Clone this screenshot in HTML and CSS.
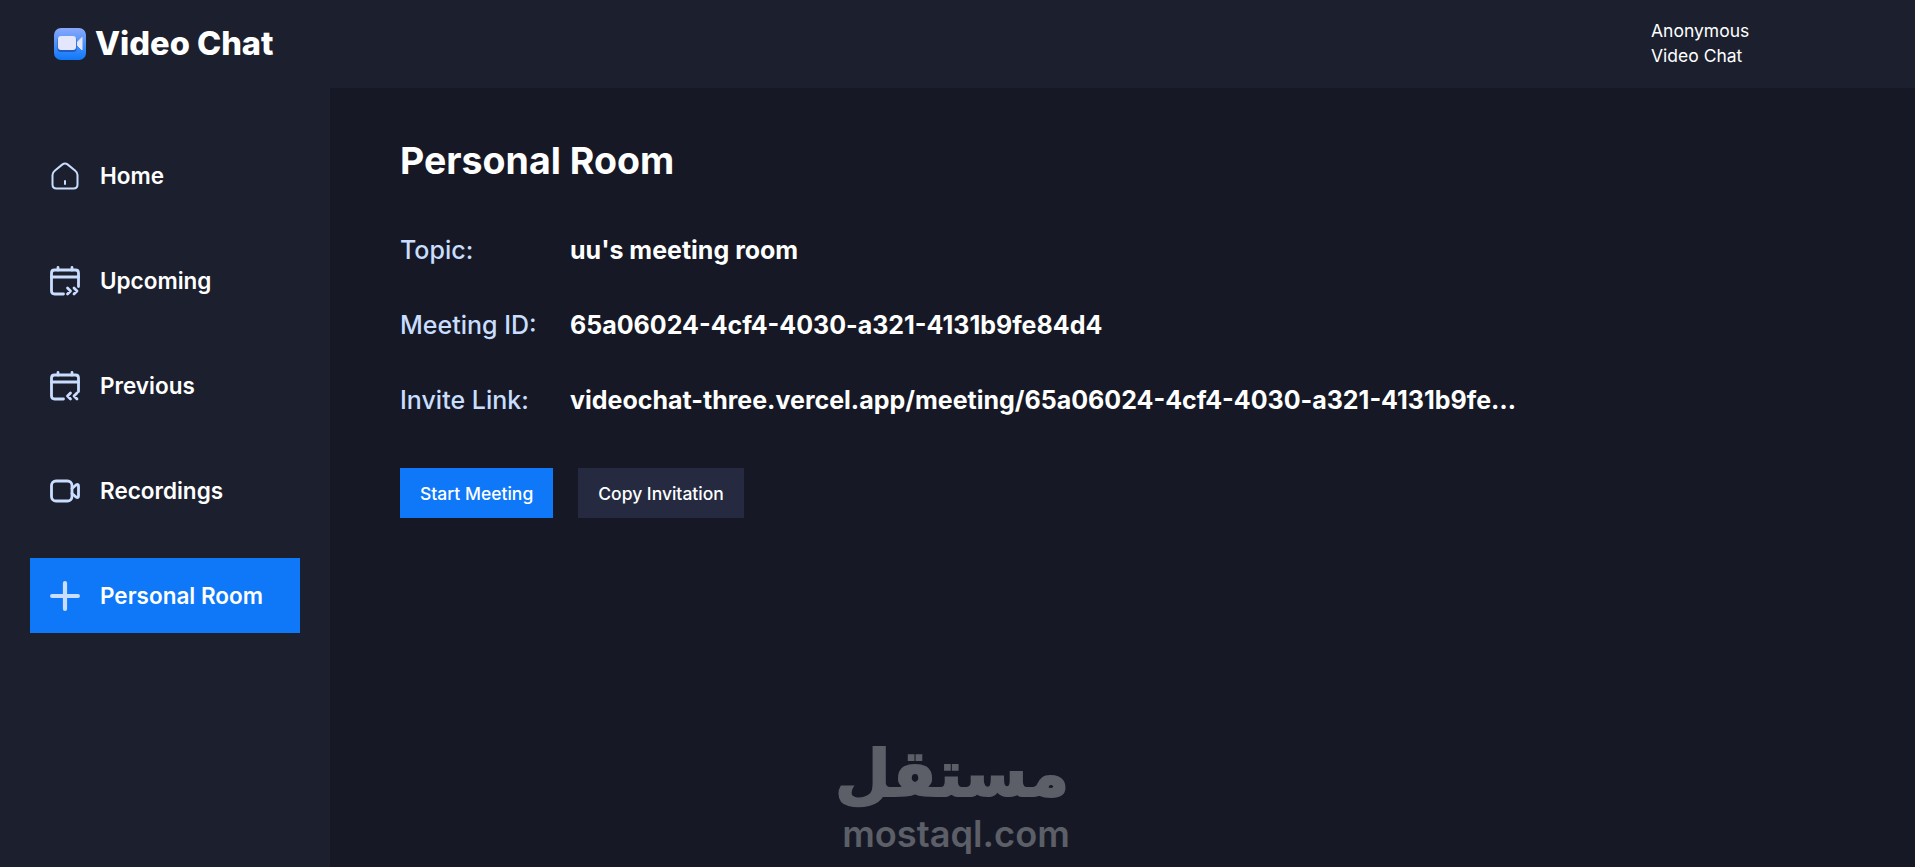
FILE: index.html
```html
<!DOCTYPE html>
<html lang="en">
<head>
    <meta charset="UTF-8">
    <meta name="viewport" content="width=device-width, initial-scale=1.0">
    <title>Video Chat</title>
    <link rel="stylesheet" href="styles.css">
</head>
<body>
    <header class="topbar">
        <a class="brand">
            <svg class="brand-icon" viewBox="0 0 32 32">
                <defs>
                    <linearGradient id="brand-bg" x1="0" y1="0" x2="0" y2="1">
                        <stop offset="0" stop-color="#8aa8fb"/>
                        <stop offset="1" stop-color="#0e78f9"/>
                    </linearGradient>
                </defs>
                <rect width="32" height="32" rx="7" fill="url(#brand-bg)"/>
                <rect x="3.5" y="9" width="19" height="15" rx="3" fill="#1b4fae" opacity="0.75"/>
                <rect x="4" y="8" width="18" height="14" rx="3" fill="#e4e6fb"/>
                <path d="M23.5 14 L28 9.5 V22 L23.5 17.5 Z" fill="#e4e6fb" stroke="#e4e6fb" stroke-linejoin="round"/>
            </svg>
            <span class="brand-name">Video Chat</span>
        </a>
        <div class="user-info">
            <div>Anonymous</div>
            <div>Video Chat</div>
        </div>
    </header>

    <div class="layout">
        <!-- Sidebar -->
        <nav class="sidebar">
            <a class="nav-item">
                <svg class="nav-icon" viewBox="0 0 30 30" fill="none" stroke="#c9ddff" stroke-width="2" stroke-linecap="round" stroke-linejoin="round">
                    <path d="M5 9.5 L12.5 3.4 Q15 1.6 17.5 3.4 L25 9.5 Q27.5 11.5 27.5 14 V23.5 Q27.5 27.5 23.5 27.5 H6.5 Q2.5 27.5 2.5 23.5 V14 Q2.5 11.5 5 9.5 Z"/>
                    <path d="M15 20 V23" stroke-width="2"/>
                </svg>
                <span>Home</span>
            </a>
            <a class="nav-item">
                <svg class="nav-icon" viewBox="0 0 30 30" fill="none" stroke="#c9ddff" stroke-width="2.8" stroke-linecap="round" stroke-linejoin="round">
                    <path d="M13.5 28 H4.5 Q1.5 28 1.5 25 V7 Q1.5 4 4.5 4 H25.5 Q28.5 4 28.5 7 V20.5"/>
                    <path d="M1.5 11 H28.5 M8 1.5 V4 M22 1.5 V4"/>
                    <path d="M17.5 22 L20.5 25 L17.5 28 M24 22 L27 25 L24 28"/>
                </svg>
                <span>Upcoming</span>
            </a>
            <a class="nav-item">
                <svg class="nav-icon" viewBox="0 0 30 30" fill="none" stroke="#c9ddff" stroke-width="2.8" stroke-linecap="round" stroke-linejoin="round">
                    <path d="M13.5 28 H4.5 Q1.5 28 1.5 25 V7 Q1.5 4 4.5 4 H25.5 Q28.5 4 28.5 7 V20.5"/>
                    <path d="M1.5 11 H28.5 M8 1.5 V4 M22 1.5 V4"/>
                    <path d="M20.5 22 L17.5 25 L20.5 28 M27 22 L24 25 L27 28"/>
                </svg>
                <span>Previous</span>
            </a>
            <a class="nav-item">
                <svg class="nav-icon" viewBox="0 0 30 30" fill="none" stroke="#c9ddff" stroke-width="2.8" stroke-linecap="round" stroke-linejoin="round">
                    <rect x="1.5" y="5" width="20.5" height="20" rx="4.5"/>
                    <path d="M22 12.5 L26 9 Q28.5 7.5 28.5 10 V20 Q28.5 22.5 26 21 L22 17.5"/>
                </svg>
                <span>Recordings</span>
            </a>
            <a class="nav-item active">
                <svg class="nav-icon" viewBox="0 0 30 30" fill="none" stroke="#c9ddff" stroke-width="4.2" stroke-linecap="round">
                    <path d="M15 2.1 V27.9 M2.1 15 H27.9"/>
                </svg>
                <span>Personal Room</span>
            </a>
        </nav>

        <!-- Personal Room -->
        <main class="content">
            <h1>Personal Room</h1>
            <div class="details">
                <div class="detail-row">
                    <span class="detail-label">Topic:</span>
                    <span class="detail-value">uu's meeting room</span>
                </div>
                <div class="detail-row">
                    <span class="detail-label">Meeting ID:</span>
                    <span class="detail-value">65a06024-4cf4-4030-a321-4131b9fe84d4</span>
                </div>
                <div class="detail-row">
                    <span class="detail-label">Invite Link:</span>
                    <span class="detail-value">videochat-three.vercel.app/meeting/65a06024-4cf4-4030-a321-4131b9fe…</span>
                </div>
            </div>
            <div class="actions">
                <button class="btn btn-blue">Start Meeting</button>
                <button class="btn btn-dark">Copy Invitation</button>
            </div>
        </main>
    </div>

    <!-- Watermark over the page -->
    <div class="watermark">
        <div class="watermark-ar" lang="ar" dir="rtl">مستقل</div>
        <div class="watermark-en">mostaql.com</div>
    </div>
</body>
</html>
```

FILE: styles.css
```css
* {
    box-sizing: border-box;
}
html, body {
    height: 100%;
}
body {
    margin: 0;
    height: 867px;
    overflow: hidden;
    background: #161925;
    color: #fff;
    font-family: Inter, "Liberation Sans", sans-serif;
    position: relative;
}

/* top bar */
.topbar {
    height: 88px;
    background: #1c1f2e;
    display: flex;
    align-items: center;
    justify-content: space-between;
    padding: 0 213px 0 54px;
}
.brand {
    display: flex;
    align-items: center;
    gap: 9px;
}
.brand-icon {
    width: 32px;
    height: 32px;
}
.brand-name {
    font-size: 32.6px;
    font-weight: 800;
    line-height: 40px;
    margin-bottom: 2px;
}
.user-info {
    width: 51px;
    margin-bottom: 2px;
    font-size: 17.5px;
    line-height: 25px;
    white-space: nowrap;
}

.layout {
    display: flex;
    height: 779px;
}

/* sidebar */
.sidebar {
    width: 330px;
    background: #1c1f2e;
    padding: 50px 30px 0;
    display: flex;
    flex-direction: column;
    gap: 30px;
}
.nav-item {
    height: 75px;
    display: flex;
    align-items: center;
    gap: 20px;
    padding: 0 20px;
    font-size: 22.5px;
    font-weight: 600;
}
.nav-item.active {
    background: #0e78f9;
}
.nav-icon {
    width: 30px;
    height: 30px;
    flex: none;
}

/* main */
.content {
    flex: 1;
    padding: 53px 70px 0;
    min-width: 0;
}
h1 {
    margin: 0;
    font-size: 37.5px;
    font-weight: 700;
    line-height: 40px;
}
.details {
    margin-top: 54px;
    display: flex;
    flex-direction: column;
    gap: 45px;
}
.detail-row {
    display: flex;
    align-items: center;
    height: 30px;
    font-size: 25px;
}
.detail-label {
    width: 170px;
    flex: none;
    color: #c9ddff;
    font-weight: 500;
}
.detail-value {
    font-weight: 700;
    white-space: nowrap;
}
.actions {
    margin-top: 53px;
    display: flex;
    gap: 25px;
}
.btn {
    height: 50px;
    padding: 0 20px;
    border: 0;
    color: #fff;
    font-family: inherit;
    font-size: 17.5px;
    font-weight: 500;
}
.btn-blue {
    background: #0e78f9;
}
.btn-dark {
    background: #252a41;
}

/* watermark */
.watermark {
    position: absolute;
    left: 843px;
    top: 734px;
    width: 226px;
    text-align: center;
    color: #5c5f67;
}
.watermark-ar {
    font-family: "DejaVu Sans", sans-serif;
    font-size: 64px;
    font-weight: 700;
    line-height: 80px;
    -webkit-text-stroke: 2px #5c5f67;
    white-space: nowrap;
    text-align: center;
    padding-left: 8px;
}
.watermark-en {
    font-family: Inter, sans-serif;
    font-size: 36.2px;
    font-weight: 600;
    line-height: 40px;
    margin: 0 -4px;
}
```
